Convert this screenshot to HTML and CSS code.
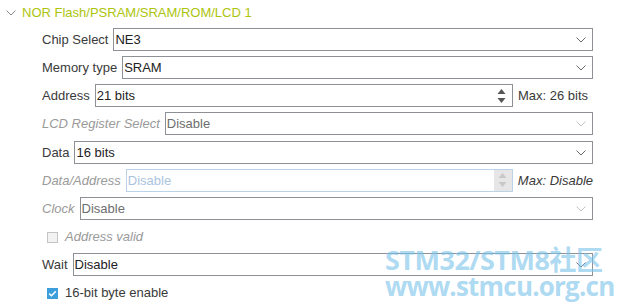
FILE: index.html
```html
<!DOCTYPE html>
<html>
<head>
<meta charset="utf-8">
<link rel="stylesheet" href="styles.css">
</head>
<body>
<div class="panel">
  <div class="header">
    <svg class="caret" width="10" height="6" viewBox="0 0 10 6"><path d="M0.5 0.5 L5 5 L9.5 0.5" fill="none" stroke="#8a8a8a" stroke-width="1"/></svg>
    <span class="title">NOR Flash/PSRAM/SRAM/ROM/LCD 1</span>
  </div>
  <div class="rows">
    <div class="row">
      <span class="label">Chip Select</span>
      <div class="box select"><span class="val">NE3</span><svg class="chev" width="10" height="6" viewBox="0 0 10 6"><path d="M0.5 0.5 L5 5 L9.5 0.5" fill="none" stroke="#6a6a6a"/></svg></div>
    </div>
    <div class="row">
      <span class="label">Memory type</span>
      <div class="box select"><span class="val">SRAM</span><svg class="chev" width="10" height="6" viewBox="0 0 10 6"><path d="M0.5 0.5 L5 5 L9.5 0.5" fill="none" stroke="#6a6a6a"/></svg></div>
    </div>
    <div class="row">
      <span class="label">Address</span>
      <div class="box spin"><span class="val">21 bits</span><svg class="arrows" width="9" height="16" viewBox="0 0 9 16"><path d="M4.5 1 L8.5 6 L0.5 6 Z" fill="#555"/><path d="M0.5 10 L8.5 10 L4.5 15 Z" fill="#555"/></svg></div>
      <span class="max">Max: 26 bits</span>
    </div>
    <div class="row">
      <span class="label dis">LCD Register Select</span>
      <div class="box select"><span class="val dval">Disable</span><svg class="chev" width="10" height="6" viewBox="0 0 10 6"><path d="M0.5 0.5 L5 5 L9.5 0.5" fill="none" stroke="#c4c4c4"/></svg></div>
    </div>
    <div class="row">
      <span class="label">Data</span>
      <div class="box select"><span class="val">16 bits</span><svg class="chev" width="10" height="6" viewBox="0 0 10 6"><path d="M0.5 0.5 L5 5 L9.5 0.5" fill="none" stroke="#6a6a6a"/></svg></div>
    </div>
    <div class="row">
      <span class="label dis">Data/Address</span>
      <div class="box spin disbox"><span class="val bval">Disable</span><span class="spinbg"><svg class="arrows" width="9" height="16" viewBox="0 0 9 16"><path d="M4.5 1 L8.5 6 L0.5 6 Z" fill="#c8c8c8"/><path d="M0.5 10 L8.5 10 L4.5 15 Z" fill="#c8c8c8"/></svg></span></div>
      <span class="max dis">Max: Disable</span>
    </div>
    <div class="row">
      <span class="label dis">Clock</span>
      <div class="box select"><span class="val dval">Disable</span><svg class="chev" width="10" height="6" viewBox="0 0 10 6"><path d="M0.5 0.5 L5 5 L9.5 0.5" fill="none" stroke="#c4c4c4"/></svg></div>
    </div>
    <div class="row check">
      <span class="cb off"></span>
      <span class="dis">Address valid</span>
    </div>
    <div class="row">
      <span class="label">Wait</span>
      <div class="box select"><span class="val">Disable</span><svg class="chev" width="10" height="6" viewBox="0 0 10 6"><path d="M0.5 0.5 L5 5 L9.5 0.5" fill="none" stroke="#6a6a6a"/></svg></div>
    </div>
    <div class="row check">
      <span class="cb on"><svg width="11" height="11" viewBox="0 0 11 11"><path d="M2.2 5.6 L4.5 7.8 L8.8 3.2" fill="none" stroke="#fff" stroke-width="1.5"/></svg></span>
      <span class="lbl2">16-bit byte enable</span>
    </div>
  </div>
  <div class="watermark">
    <div class="wm1">STM32/STM8社区</div>
    <div class="wm2">www.stmcu.org.cn</div>
  </div>
</div>
</body>
</html>
```

FILE: styles.css
```css
html, body {
  margin: 0;
  padding: 0;
  background: #ffffff;
}
body {
  font-family: "Liberation Sans", Arial, sans-serif;
  font-size: 13px;
  color: #3a3a3a;
  width: 617px;
  height: 307px;
  overflow: hidden;
}
.panel {
  position: relative;
  width: 617px;
  height: 307px;
}
.header {
  display: flex;
  align-items: center;
  height: 28px;
  padding-left: 6px;
  box-sizing: border-box;
  padding-bottom: 3px;
}
.caret {
  display: block;
  margin-right: 6px;
  margin-top: 1px;
}
.title {
  color: #adc40c;
  line-height: 15px;
}
.rows {
  display: grid;
  grid-template-columns: minmax(0, 1fr);
  grid-auto-rows: 23px;
  row-gap: 5.17px;
  padding-left: 42px;
  padding-right: 24px;
}
.row {
  display: flex;
  align-items: center;
  gap: 5px;
  height: 23px;
  min-width: 0;
}
.label {
  white-space: nowrap;
  color: #3a3a3a;
}
.dis {
  color: #9a9a9a;
  font-style: italic;
}
.box {
  flex: 1 1 0;
  min-width: 0;
  height: 23px;
  box-sizing: border-box;
  border: 1px solid #8d9196;
  display: flex;
  align-items: center;
  padding-left: 1px;
  background: #fff;
}
.val {
  flex: 1;
  color: #222;
  white-space: nowrap;
}
.dval {
  color: #6e6e6e;
}
.bval {
  color: #abc3de;
}
.chev {
  display: block;
  margin-right: 6px;
  margin-top: 1px;
}
.arrows {
  display: block;
  margin-right: 6px;
}
.disbox {
  border-color: #bcd2e8;
  padding-right: 0;
}
.spinbg {
  display: flex;
  align-items: center;
  justify-content: center;
  width: 18px;
  height: 21px;
  background: #e6e6e6;
}
.spinbg .arrows {
  margin-right: 0;
}
.max {
  flex: 0 0 75px;
  white-space: nowrap;
  color: #3a3a3a;
}
.check {
  gap: 7px;
  padding-left: 5px;
}
.cb {
  display: flex;
  align-items: center;
  justify-content: center;
  width: 11px;
  height: 11px;
  box-sizing: border-box;
  margin-top: 1px;
}
.cb.off {
  border: 1px solid #c4c4c4;
  background: #f2f2f2;
}
.cb.on {
  background: #3c9fdc;
}
.cb svg {
  display: block;
}
.lbl2 {
  color: #3a3a3a;
}
.watermark {
  position: absolute;
  left: 385px;
  top: 245px;
  color: rgba(120, 194, 234, 0.62);
  font-weight: bold;
  font-family: "Open Sans", "Noto Sans CJK SC", sans-serif;
  pointer-events: none;
}
.wm1 {
  font-size: 27px;
  line-height: 30px;
  letter-spacing: -0.5px;
  white-space: nowrap;
}
.wm2 {
  font-size: 26px;
  line-height: 22px;
  letter-spacing: -0.8px;
  white-space: nowrap;
}
```
